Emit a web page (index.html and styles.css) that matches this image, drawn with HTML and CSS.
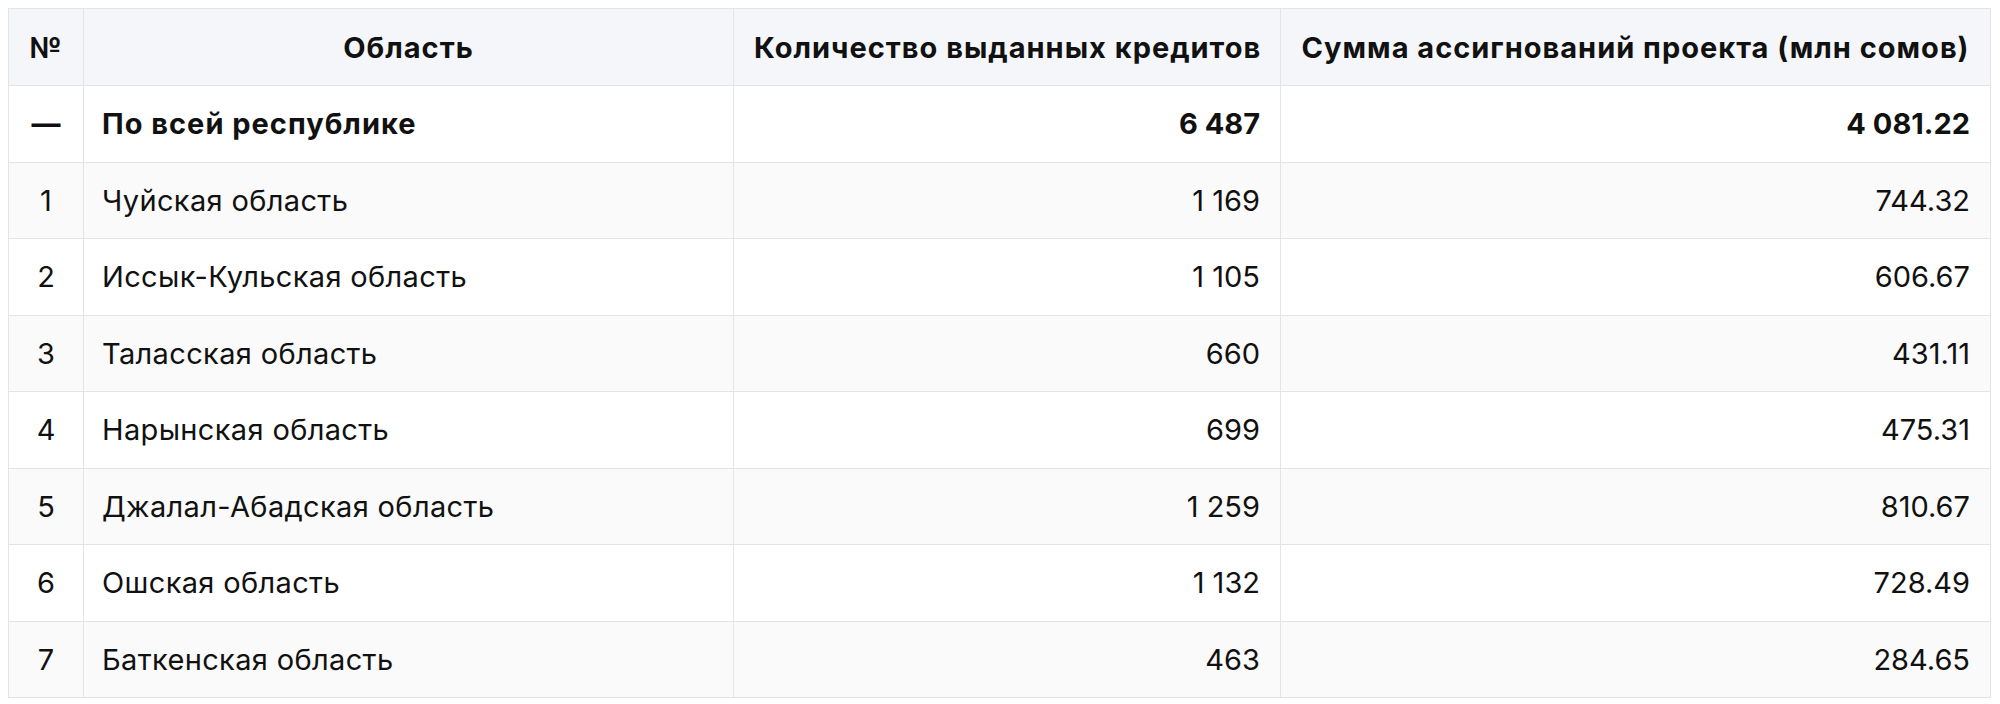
FILE: index.html
```html
<!DOCTYPE html>
<html lang="ru">
<head>
<meta charset="utf-8">
<link rel="stylesheet" href="styles.css">
</head>
<body>
<table class="data-table">
  <colgroup>
    <col class="c-num"><col class="c-name"><col class="c-count"><col class="c-sum">
  </colgroup>
  <thead>
    <tr>
      <th>№</th>
      <th>Область</th>
      <th>Количество выданных кредитов</th>
      <th>Сумма ассигнований проекта (млн сомов)</th>
    </tr>
  </thead>
  <tbody>
    <tr class="total">
      <td class="num">—</td>
      <td class="name">По всей республике</td>
      <td class="val">6&nbsp;487</td>
      <td class="val">4&nbsp;081.22</td>
    </tr>
    <tr class="odd"><td class="num">1</td><td class="name">Чуйская область</td><td class="val">1&nbsp;169</td><td class="val">744.32</td></tr>
    <tr><td class="num">2</td><td class="name">Иссык-Кульская область</td><td class="val">1&nbsp;105</td><td class="val">606.67</td></tr>
    <tr class="odd"><td class="num">3</td><td class="name">Таласская область</td><td class="val">660</td><td class="val">431.11</td></tr>
    <tr><td class="num">4</td><td class="name">Нарынская область</td><td class="val">699</td><td class="val">475.31</td></tr>
    <tr class="odd"><td class="num">5</td><td class="name">Джалал-Абадская область</td><td class="val">1&nbsp;259</td><td class="val">810.67</td></tr>
    <tr><td class="num">6</td><td class="name">Ошская область</td><td class="val">1&nbsp;132</td><td class="val">728.49</td></tr>
    <tr class="odd"><td class="num">7</td><td class="name">Баткенская область</td><td class="val">463</td><td class="val">284.65</td></tr>
  </tbody>
</table>
</body>
</html>
```

FILE: styles.css
```css
html, body {
  margin: 0;
  padding: 0;
  background: #ffffff;
}
body {
  padding: 8px;
  font-family: Inter, "Noto Sans", "Liberation Sans", sans-serif;
  color: #111111;
}
.data-table {
  width: 1982px;
  border-collapse: collapse;
  table-layout: fixed;
  font-size: 29px;
}
.c-num { width: 75px; }
.c-name { width: 650px; }
.c-count { width: 547px; }
.c-sum { width: 710px; }
.data-table th,
.data-table td {
  border: 1.5px solid #e4e4e7;
  padding: 0 20px;
  white-space: nowrap;
}
.data-table thead tr {
  height: 77px;
  background: #f5f6fa;
}
.data-table th {
  font-weight: 700;
  text-align: center;
  letter-spacing: 1px;
}
.data-table tbody tr {
  height: 76.5px;
  background: #ffffff;
}
.data-table tbody tr.odd {
  background: #fafafa;
}
.num { text-align: center; padding: 0 !important; }
.data-table td.name { text-align: left; padding-left: 18px; letter-spacing: 0.35px; }
.val { text-align: right; }
.total td { font-weight: 700; }
.data-table .total td.name { letter-spacing: 1px; }
```
